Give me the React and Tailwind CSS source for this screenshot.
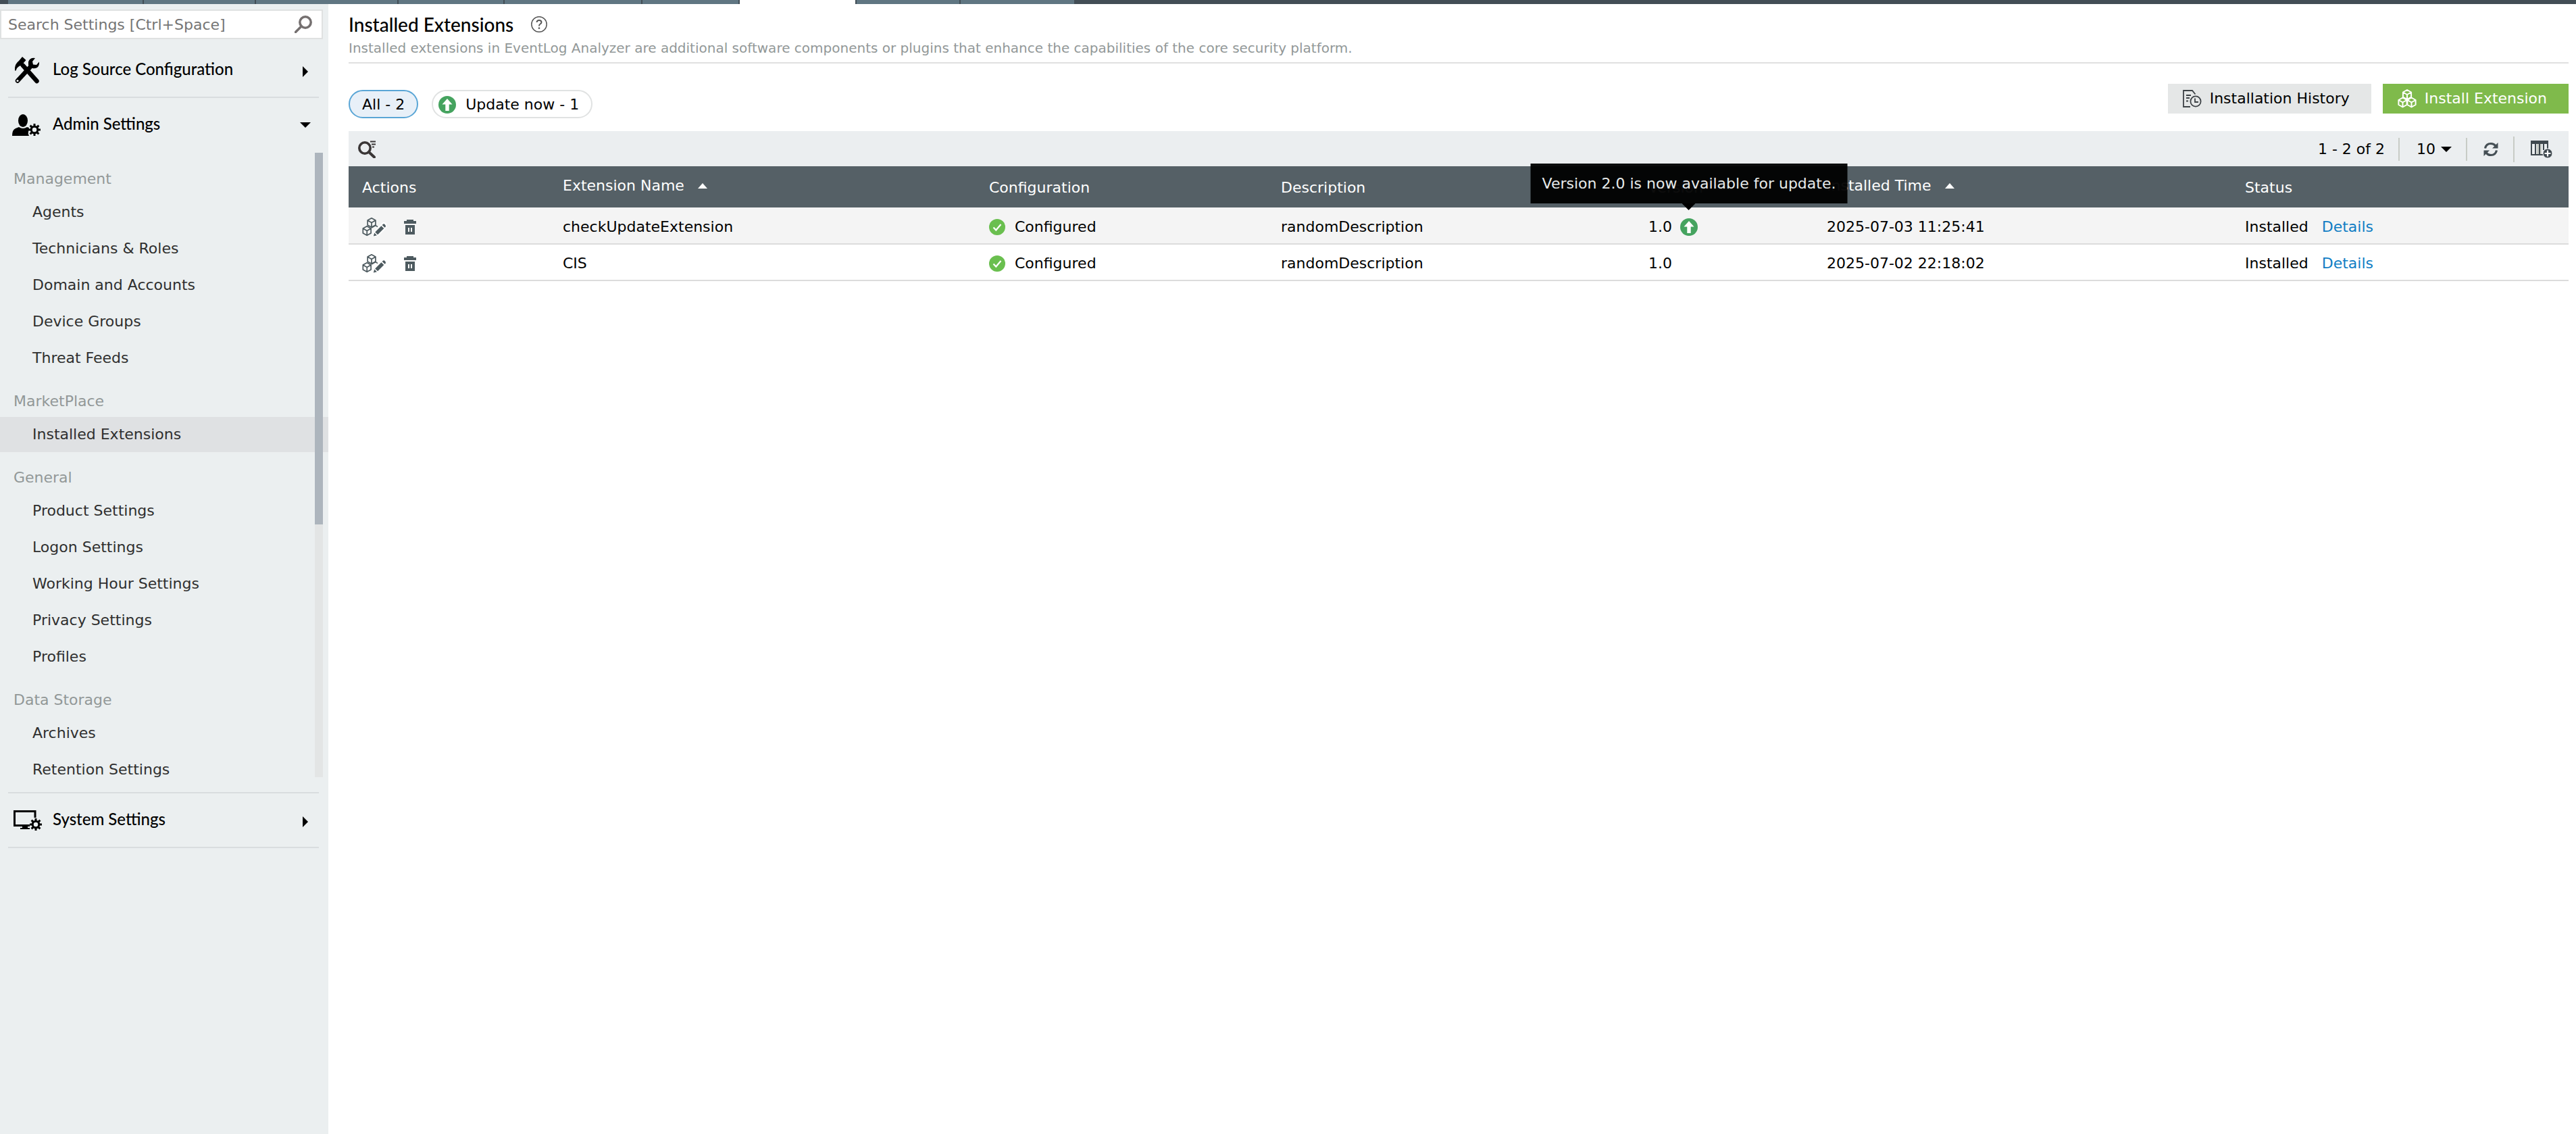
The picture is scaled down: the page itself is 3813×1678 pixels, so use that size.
import React, { useState } from 'react';

// ── Data ───────────────────────────────────────────────────────────
const topTabs = [
  { id: 'home', className: 'w-[199px] bg-[#607682]' },
  { id: 'reports', className: 'w-[164px] bg-[#607682]' },
  { id: 'compliance', className: 'w-[209px] bg-[#607682]' },
  { id: 'search', className: 'w-[155px] bg-[#607682]' },
  { id: 'correlation', className: 'w-[202px] bg-[#607682]' },
  { id: 'alerts', className: 'w-[142px] bg-[#607682]' },
  { id: 'settings', className: 'w-[171px] bg-white' },
  { id: 'support', className: 'w-[152px] bg-[#607682]' },
  { id: 'more', className: 'w-[168px] bg-[#607682]' },
];

const adminGroups = [
  { title: 'Management', items: ['Agents', 'Technicians & Roles', 'Domain and Accounts', 'Device Groups', 'Threat Feeds'] },
  { title: 'MarketPlace', items: ['Installed Extensions'] },
  { title: 'General', items: ['Product Settings', 'Logon Settings', 'Working Hour Settings', 'Privacy Settings', 'Profiles'] },
  { title: 'Data Storage', items: ['Archives', 'Retention Settings'] },
];

const extensions = [
  { name: 'checkUpdateExtension', description: 'randomDescription', version: '1.0', update: '2.0', time: '2025-07-03 11:25:41' },
  { name: 'CIS', description: 'randomDescription', version: '1.0', time: '2025-07-02 22:18:02' },
];

// ── Icons ──────────────────────────────────────────────────────────
const Cube = ({ cx, cy, r = 7 }) => {
  const w = r * 0.87;
  return (
    <path
      d={`M${cx} ${cy - r}l${w} ${r / 2}v${r}l${-w} ${r / 2}l${-w} ${-r / 2}v${-r}z M${cx} ${cy + r}v${-r}l${w} ${-r / 2} M${cx} ${cy}l${-w} ${-r / 2}`}
    />
  );
};

const CubesIcon = ({ className }) => (
  <svg viewBox="0 0 28 28" className={className} fill="none" stroke="currentColor" strokeWidth="2" strokeLinejoin="round">
    <Cube cx={14} cy={8} />
    <Cube cx={7.5} cy={19.5} />
    <Cube cx={20.5} cy={19.5} />
  </svg>
);

const EditExtensionIcon = () => (
  <svg viewBox="0 0 36 28" className="h-7 w-9" fill="none">
    <g stroke="#4d5a5f" strokeWidth="1.7" strokeLinejoin="round">
      <Cube cx={14} cy={7.5} r={6.8} />
      <Cube cx={7.2} cy={19.5} r={6.8} />
      <path d="M14 15l6-3.4 3 2" />
    </g>
    <path d="M17 27.500l2-7L31 8.500q2-1 4 1t.500 4L23.500 25.500z" fill="#fff" stroke="#fff" strokeWidth="3" strokeLinejoin="round" />
    <path d="M16.800 27.600l1.400-5.100 3.700 3.700z M19.200 21.400l9.200-9.200 3.900 3.900-9.200 9.200z M29.600 11l1.300-1.300q1.400-1 2.900.500t1.100 3.200l-1.300 1.400z" fill="#4d5a5f" />
  </svg>
);

const TrashIcon = () => (
  <svg viewBox="0 0 18 22" className="h-[22px] w-[18px]" fill="#4d5a5f">
    <path fillRule="evenodd" d="M4 0h10v2h4v4H0V2h4z M2 8h14v14H2z M6 12v6h2v-6z M10 12v6h2v-6z" />
  </svg>
);

const UpdateIcon = () => (
  <svg viewBox="0 0 26 26" className="block h-[26px] w-[26px]">
    <circle cx="13" cy="13" r="13" fill="#45a35f" />
    <path d="M13 4l7.500 8.500h-4.800V22h-5.400v-9.500H5.500z" fill="#fff" />
  </svg>
);

const CheckIcon = () => (
  <svg viewBox="0 0 24 24" className="block h-6 w-6">
    <circle cx="12" cy="12" r="12" fill="#6abf4f" />
    <path d="M6.500 12.500l3.800 4L17.500 8" fill="none" stroke="#fff" strokeWidth="2.200" />
  </svg>
);

const SortIcon = () => (
  <svg viewBox="0 0 14 8" className="h-2 w-3.5" fill="#fff"><path d="M7 0l7 8H0z" /></svg>
);

const GearShape = ({ cx, cy, r, width = 3 }) => (
  <g>
    {[0, 45, 90, 135].map(angle => (
      <path key={angle} d={`M${cx} ${cy - r}v${r * 2}`} stroke="currentColor" strokeWidth={width} transform={`rotate(${angle} ${cx} ${cy})`} />
    ))}
    <circle cx={cx} cy={cy} r={r * 0.7} fill="currentColor" />
    <circle cx={cx} cy={cy} r={r * 0.36} fill="#ebeff0" />
  </g>
);

const ToolsIcon = () => (
  <svg viewBox="0 0 36 40" className="h-10 w-9 shrink-0" fill="currentColor">
    <path d="M11 0l5.500 5-4 4.500 3 3-4 4-3.500-3.500-3 2q-3 2-3.500 5.500H0q-1-9 6-14.500z" />
    <path d="M12 13l20.500 23" stroke="currentColor" strokeWidth="6.500" strokeLinecap="round" />
    <path d="M22 16L4 35.500" stroke="currentColor" strokeWidth="6.500" strokeLinecap="round" />
    <path d="M30 2l-4 5 1 4.500 5 .500 4-4.500q.500 7-4 9-4 1.500-8 0l-4-4q0-3 0-5Q22 1 30 2z" />
    <circle cx="4" cy="35.500" r="1.600" fill="#ebeff0" />
  </svg>
);

const AdminIcon = () => (
  <svg viewBox="0 0 42 32" className="h-8 w-[42px] shrink-0" fill="currentColor">
    <ellipse cx="16" cy="9.500" rx="7" ry="9.500" />
    <path d="M0 32q0-9 5-11l5-2q6 4 12 0l3 1-1 6q-1 3 1 6z" />
    <GearShape cx={33} cy={23} r={9} />
  </svg>
);

const SystemIcon = () => (
  <svg viewBox="0 0 42 30" className="h-[30px] w-[42px] shrink-0" fill="none">
    <path d="M32 11V1.500H1.500v21H24" stroke="currentColor" strokeWidth="3" />
    <path d="M13 23h8v3h3v2H10v-2h3z" fill="currentColor" />
    <GearShape cx={33} cy={21} r={9} />
  </svg>
);

const CaretRight = () => (
  <svg viewBox="0 0 8 16" className="mt-1 h-4 w-2" fill="currentColor"><path d="M0 0l8 8-8 8z" /></svg>
);

const CaretDown = ({ className = 'h-2 w-4' }) => (
  <svg viewBox="0 0 16 8" className={className} fill="currentColor"><path d="M0 0h16L8 8z" /></svg>
);

// ── Sidebar ────────────────────────────────────────────────────────
const SectionButton = ({ icon, label, open, onClick }) => (
  <button onClick={onClick} className="flex h-[79px] w-full items-center pl-1.5 text-left font-['Lato',sans-serif] text-2xl font-medium text-black">
    <span className="flex w-[60px] justify-start">{icon}</span>
    <span className="flex-1 pb-1">{label}</span>
    <span className="flex w-10 justify-center">{open ? <CaretDown /> : <CaretRight />}</span>
  </button>
);

const Sidebar = ({ active, onSelect }) => {
  const [adminOpen, setAdminOpen] = useState(true);

  return (
    <aside className="w-[486px] shrink-0 bg-[#ebeff0] pt-2">
      <div className="mr-2 flex h-11 items-center border-2 border-[#dfe1e1] bg-white pl-2.5 pr-3.5">
        <input
          aria-label="Search Settings"
          placeholder="Search Settings [Ctrl+Space]"
          className="min-w-0 flex-1 bg-transparent pt-0.5 outline-none placeholder:text-[#757575]"
        />
        <svg viewBox="0 0 26 26" className="h-[26px] w-[26px]" fill="none" stroke="#757070" strokeWidth="3.500">
          <circle cx="16" cy="10" r="8.200" />
          <path d="M10 16l-8.500 8.500" strokeLinecap="round" />
        </svg>
      </div>

      <div className="ml-3 mr-3.5 mt-1.5 border-b-2 border-[#d9dddf]">
        <SectionButton icon={<span className="pl-1"><ToolsIcon /></span>} label="Log Source Configuration" />
      </div>
      <div className="ml-3 mr-3.5">
        <SectionButton icon={<AdminIcon />} label="Admin Settings" open={adminOpen} onClick={() => setAdminOpen(!adminOpen)} />
      </div>

      {adminOpen && (
        <div className="relative mt-0.5">
          <nav className="h-[924px] overflow-y-auto pt-[3px] [scrollbar-width:none]">
            {adminGroups.map(({ title, items }) => (
              <div key={title}>
                <p className="px-5 pb-[9px] pt-[22px] leading-7 text-[#929898]">{title}</p>
                {items.map(item => (
                  <a
                    key={item}
                    href="#"
                    onClick={() => onSelect(item)}
                    className={`mb-0.5 block py-3 pl-12 leading-7 text-[#2f2f2f] ${item === active ? 'bg-[#dfe1e3]' : ''}`}
                  >
                    {item}
                  </a>
                ))}
              </div>
            ))}
          </nav>
          {/* Scrollbar */}
          <div className="absolute inset-y-0 right-2 w-3 bg-[#e3e5e5]">
            <div className="h-[550px] bg-[#adb5bd]" />
          </div>
        </div>
      )}

      <div className="ml-3 mr-3.5 mt-[22px] border-y-2 border-[#d9dddf]">
        <SectionButton icon={<span className="pl-0.5"><SystemIcon /></span>} label="System Settings" />
      </div>
    </aside>
  );
};

// ── Table ──────────────────────────────────────────────────────────
const UpdateBadge = ({ version }) => (
  <span className="relative">
    <UpdateIcon />
    <span role="tooltip" className="absolute bottom-full left-1/2 mb-[22px] -translate-x-1/2 whitespace-nowrap bg-black/95 px-[17px] pb-[15px] pt-4 leading-7 text-[#e6eaea]">
      Version {version} is now available for update.
      <svg viewBox="0 0 20 10" className="absolute left-1/2 top-full h-2.5 w-5 -translate-x-1/2"><path d="M0 0h20L10 10z" /></svg>
    </span>
  </span>
);

const ExtensionTable = () => (
  <table className="w-full table-fixed text-left text-black [&_td]:pl-5 [&_th]:pl-5">
    <colgroup>
      <col className="w-[297px]" />
      <col className="w-[631px]" />
      <col className="w-[432px]" />
      <col className="w-[544px]" />
      <col className="w-[264px]" />
      <col className="w-[619px]" />
      <col className="w-[499px]" />
    </colgroup>
    <thead className="bg-[#556066] text-white [&_th]:font-normal">
      <tr className="h-[61px]">
        <th className="pt-0.5">Actions</th>
        <th className="pb-1">
          <button className="flex items-center gap-5">Extension Name <SortIcon /></button>
        </th>
        <th className="pt-0.5">Configuration</th>
        <th className="pt-0.5">Description</th>
        <th className="pt-0.5">Version</th>
        <th className="pb-1">
          <button className="flex items-center gap-5">Installed Time <SortIcon /></button>
        </th>
        <th className="pt-0.5">Status</th>
      </tr>
    </thead>
    <tbody>
      {extensions.map(({ name, description, version, update, time }) => (
        <tr key={name} className="h-[54px] border-b-2 border-[#dcdcdc] odd:bg-[#f4f4f4] [&>td]:pt-1">
          <td>
            <div className="flex items-center gap-[26px]">
              <button aria-label="Edit extension"><EditExtensionIcon /></button>
              <button aria-label="Delete extension"><TrashIcon /></button>
            </div>
          </td>
          <td>{name}</td>
          <td>
            <div className="flex items-center gap-3.5"><CheckIcon />Configured</div>
          </td>
          <td>{description}</td>
          <td>
            <div className="flex items-center gap-3">{version}{update && <UpdateBadge version={update} />}</div>
          </td>
          <td>{time}</td>
          <td>
            <div className="flex items-center gap-5">
              Installed
              <a href="#" className="text-[#0f7dc4]">Details</a>
            </div>
          </td>
        </tr>
      ))}
    </tbody>
  </table>
);

const Toolbar = () => (
  <div className="flex h-[52px] items-center bg-[#ebeef0] pl-3.5 pr-6 pt-0.5 text-black">
    <button aria-label="Search table">
      <svg viewBox="0 0 26 26" className="block h-[26px] w-[26px]" fill="none" stroke="#3a3636">
        <circle cx="10" cy="11" r="8.200" strokeWidth="3.600" />
        <path d="M16 17l8 7.500" strokeWidth="4" strokeLinecap="round" />
        <path d="M18 1.500h8 M20 5.500h6 M21 9.500h3" strokeWidth="2" />
      </svg>
    </button>
    <span className="ml-auto">1 - 2 of 2</span>
    <span className="ml-5 h-[34px] w-0.5 bg-[#c8ccc6]" />
    <label className="relative ml-[25px] flex items-center">
      <select aria-label="Rows per page" defaultValue="10" className="w-[52px] appearance-none bg-transparent outline-none">
        <option>10</option>
        <option>25</option>
        <option>50</option>
      </select>
      <CaretDown className="pointer-events-none absolute right-0 h-2 w-4" />
    </label>
    <span className="ml-[21px] h-[34px] w-0.5 bg-[#c8ccc6]" />
    <button aria-label="Refresh" className="ml-6">
      <svg viewBox="0 0 22 22" className="block h-[22px] w-[22px]">
        <path d="M2.500 9.500Q4 2.500 11 2.500q4.500 0 7 3.500 M19.500 12.500Q18 19.500 11 19.500q-4.500 0-7-3.500" fill="none" stroke="#454f55" strokeWidth="3.200" />
        <path d="M21.500 1v8.500H13z M.500 21v-8.500H9z" fill="#454f55" />
      </svg>
    </button>
    <span className="ml-[22px] h-[38px] w-0.5 bg-[#c8ccc6]" />
    <button aria-label="Choose columns" className="ml-6">
      <svg viewBox="0 0 32 26" className="block h-[26px] w-8" fill="none" stroke="#3f484e">
        <path d="M9 5h7v16H9z" fill="#c8ccc6" stroke="none" />
        <path d="M0 2.500h26" strokeWidth="5" />
        <path d="M1 4v17h17 M7 5v16 M13 5v16 M19 5v9 M25 5v8" strokeWidth="2" />
        <circle cx="25" cy="19" r="7" fill="#3f484e" stroke="#ebeef0" strokeWidth="1" />
        <path d="M25 14.500v9 M20.500 19h9" stroke="#fff" strokeWidth="2.200" />
      </svg>
    </button>
  </div>
);

// ── Page ───────────────────────────────────────────────────────────
export default function App() {
  const [active, setActive] = useState('Installed Extensions');

  return (
    <div className="flex min-h-screen flex-col bg-white font-['DejaVu_Sans',sans-serif] text-[22px] leading-7">
      <div className="flex h-1.5 gap-0.5 bg-[#434e56] pl-3">
        {topTabs.map(({ id, className }) => <div key={id} className={className} />)}
      </div>

      <div className="flex flex-1">
        <Sidebar active={active} onSelect={setActive} />

        <main className="min-w-0 flex-1 pl-[30px] pr-[11px] pt-3">
          <header className="border-b-2 border-[#e0e0e0] pb-2">
            <div className="flex items-center gap-[26px]">
              <h1 className="font-['Lato',sans-serif] text-[28px] font-medium leading-9 text-black">Installed Extensions</h1>
              <button aria-label="Help">
                <svg viewBox="0 0 24 24" className="block h-6 w-6" fill="none" stroke="#555">
                  <circle cx="12" cy="12" r="11.200" strokeWidth="1.500" />
                  <path d="M8.500 9q.300-3 3.500-3t3.500 2.800q0 1.700-1.800 2.700T12 14.500" strokeWidth="2" />
                  <path d="M12 16.500v2.300" strokeWidth="2.400" />
                </svg>
              </button>
            </div>
            <p className="mt-1 text-xl leading-[26px] text-[#929898]">
              Installed extensions in EventLog Analyzer are additional software components or plugins that enhance the capabilities of the core security platform.
            </p>
          </header>

          <div className="flex items-start justify-between pb-[19px] pt-[30px] text-black">
            <div className="mt-[9px] flex gap-5">
              <button className="flex h-[42px] items-center rounded-full border-2 border-[#5aa6d6] bg-[#e8f0f8] px-[18px] pt-0.5">All - 2</button>
              <button className="flex h-[42px] items-center gap-3.5 rounded-full border-2 border-[#e0e2e2] pl-2 pr-[18px] pt-0.5">
                <UpdateIcon />Update now - 1
              </button>
            </div>
            <div className="flex gap-[17px]">
              <button className="flex h-11 items-center gap-3 bg-[#e5e7e7] pl-[22px] pr-8">
                <svg viewBox="0 0 28 26" className="h-[26px] w-7" fill="none" stroke="#3d4246" strokeWidth="1.800">
                  <path d="M11 25H1V1h13l4.500 5.500" />
                  <path d="M5 8h7 M5 12h5 M5 16.500h3" />
                  <circle cx="19" cy="17" r="7.600" />
                  <path d="M18 12.500V18h5" />
                </svg>
                Installation History
              </button>
              <button className="flex h-11 items-center gap-3 bg-[#7fba4b] pl-[22px] pr-8 text-white">
                <CubesIcon className="h-7 w-7" />
                Install Extension
              </button>
            </div>
          </div>

          <Toolbar />
          <ExtensionTable />
        </main>
      </div>
    </div>
  );
}
